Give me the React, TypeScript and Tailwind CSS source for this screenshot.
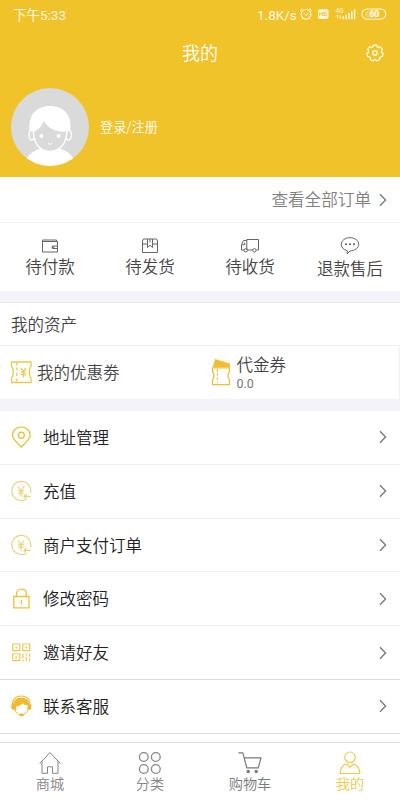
import type { ReactNode } from 'react';

const FONT = "font-['Noto_Sans_CJK_SC_DemiLight','Noto_Sans_CJK_SC_Light','Noto_Sans_CJK_SC',sans-serif] font-light";

function Chevron() {
  return (
    <svg width="8" height="14" viewBox="0 0 8 14" fill="none" stroke="#777" strokeWidth="1.3">
      <path d="M1 1.2 6.6 7 1 12.8" />
    </svg>
  );
}

function StatusBar() {
  return (
    <div className="flex h-7 items-center justify-between px-[13px] font-[Roboto,'Noto_Sans_CJK_SC',sans-serif] font-normal text-white/85">
      <span className="pt-px text-[13.5px] leading-7">下午5:33</span>
      <div className="flex items-center">
        <span className="w-[41px] pt-px text-[13.5px] leading-7">1.8K/s</span>
        <svg width="89" height="14" viewBox="0 0 89 14" fill="none" stroke="currentColor">
          <circle cx="8" cy="7.3" r="4.8" strokeWidth="1.2" />
          <path d="M2 4 4.6 1.5M14 4 11.4 1.5M5.8 6.2 8 8.4 10.300 6.200M4.500 11.500l-1 1.200M11.500 11.500l1 1.200" />
          <rect x="20" y="2.3" width="10.500" height="9.8" rx="2" fill="currentColor" stroke="none" />
          <text x="21" y="9.4" fontSize="6" fontWeight="700" fill="#f1c32a" stroke="none" fontFamily="Roboto">
            HD
          </text>
          <text x="37.500" y="6" fontSize="6.5" fill="currentColor" stroke="none" fontFamily="Roboto">
            4G
          </text>
          <path d="M39.500 8v3.500M38 9.500 39.500 8M42 8v3.500l1.500-1.500" strokeWidth=".8" />
          <path d="M45.400 9.300v3M48.200 7.800v4.500M51 6v6.300M53.800 4.300v8M56.600 2.300v10" strokeWidth="1.5" />
          <rect x="64" y="2" width="23.800" height="10.200" rx="5" strokeWidth="1.1" />
          <rect x="67" y="3.8" width="15" height="6.8" rx="3" fill="currentColor" fillOpacity=".25" stroke="none" />
          <text x="71.400" y="10.100" fontSize="8.500" fontWeight="700" fill="currentColor" stroke="none" fontFamily="Roboto">
            60
          </text>
        </svg>
      </div>
    </div>
  );
}

function GearIcon() {
  return (
    <svg width="18" height="18" viewBox="0 0 18 18" fill="none" stroke="#fffbe8" strokeWidth="1.3" strokeLinejoin="round">
      <path d="M7.3 1.2h3.4l.5 1.7 1.5.7 1.700-.8 2 2.600-1 1.600.2 1.400 1.500 1-.7 3-1.900.4-.9 1.100.1 1.700-2.900 1.300-1.200-1.300H8.400l-1.200 1.300-2.900-1.300.1-1.700-.9-1.100-1.900-.4-.7-3 1.500-1 .2-1.400-1-1.600 2-2.600 1.700.8 1.500-.7z" />
      <circle cx="9" cy="8.900" r="2.100" strokeWidth="1.500" />
    </svg>
  );
}

function Avatar() {
  return (
    <svg width="78" height="78" viewBox="0 0 78 78">
      <clipPath id="avatar-clip">
        <circle cx="39" cy="39" r="39" />
      </clipPath>
      <g clipPath="url(#avatar-clip)">
        <rect width="78" height="78" fill="#dadada" />
        <path d="M14 73C18 66 23 62 29 61h20c6 1 11 5 15 12v8H14z" fill="#fff" />
        <ellipse cx="20.800" cy="47" rx="2.900" ry="5" fill="#dadada" stroke="#fff" strokeWidth="1.400" />
        <ellipse cx="57.500" cy="47" rx="2.900" ry="5" fill="#dadada" stroke="#fff" strokeWidth="1.400" />
        <path
          d="M22.500 30v12C22 54 28 63.500 39 63.500S56 54 55.800 42V30z"
          fill="#dadada"
          stroke="#fff"
          strokeWidth="1.400"
        />
        <path
          d="M18.700 43C16.500 27 25.500 18 39 18s22.500 9 20.300 25L56 43.500C46 44.500 37 41 32.800 32.700 31 38 27 42.500 22.500 43.500z"
          fill="#fff"
        />
        <circle cx="30.400" cy="48" r="2" fill="#fff" />
        <circle cx="47.600" cy="48" r="2" fill="#fff" />
        <path d="M37 55.500q2.300 1.500 4.600 0" fill="none" stroke="#fff" />
      </g>
    </svg>
  );
}

const ORDERS: { label: string; icon: ReactNode; className: string }[] = [
  {
    label: '待付款',
    className: 'mt-[-2px]',
    icon: (
      <>
        <path d="M2.500 5.500V4h14v1.500M2.500 5.500h15v10.500h-15zM17.500 10h-5v2.500h5" />
        <path d="M11.500 11.200h3" />
      </>
    ),
  },
  {
    label: '待发货',
    className: 'mt-[-2px]',
    icon: <path d="M3.500 3h13l1 2v11.500h-15V5zM2.500 8h5M12.500 8h5M7.500 3v8.500l2.500-2.300 2.500 2.300V3M10 3v3.500" />,
  },
  {
    label: '待收货',
    className: 'mt-[-2px]',
    icon: (
      <>
        <path d="M6.800 14V3.500h11.700V14h-2M12.500 14H7.700M4.200 14H1.500V8.500l2.100-4h3.200M2.200 8.700h2.600V6.500" />
        <circle cx="5.800" cy="14.300" r="1.700" />
        <circle cx="14.400" cy="14.300" r="1.700" />
      </>
    ),
  },
  {
    label: '退款售后',
    className: 'mt-0',
    icon: (
      <>
        <path d="M10 1.700c4.900 0 8.700 2.800 8.700 6.600 0 3.600-3.800 6.400-8.700 6.700l-2.800 2.800v-3.200C3.600 13.700 1.300 11.400 1.300 8.300 1.300 4.500 5.100 1.700 10 1.700z" />
        <g fill="#555" stroke="none">
          <circle cx="6" cy="8.300" r="1" />
          <circle cx="10" cy="8.300" r="1" />
          <circle cx="14" cy="8.300" r="1" />
        </g>
      </>
    ),
  },
];

function CouponIcon() {
  return (
    <svg width="22" height="24" viewBox="0 0 22 24" fill="none" stroke="#ecc94b" strokeWidth="1.300">
      <path d="M1.500 1H21v4.500c-2.300 2-2.300 9.300 0 11.500v4.500H1.500V17c2.300-2.200 2.300-9.500 0-11.500z" />
      <path d="M6.800 1.500v3M6.800 6.500v3M6.800 12v3M6.800 17.500v3" />
      <path d="m11 7 2.500 3.500L16 7M13.500 10.500v6M10.800 11.100h5.400M10.800 13.500h5.400" />
    </svg>
  );
}

function VoucherIcon() {
  return (
    <svg width="20" height="28" viewBox="0 0 20 28" fill="none" stroke="#f0bd35" strokeWidth="1.300">
      <path d="M1.800 8.200 4 0l15 4.500v3.700z" fill="#f0bd35" stroke="none" />
      <path d="M1.500 8.800h17v4c-2 1.700-2 6 0 8v4.900h-17v-4.900c2-2 2-6.300 0-8z" />
      <path d="M6.500 10v14" strokeWidth="1.200" strokeDasharray="2.500 1.800" />
    </svg>
  );
}

const rechargeIcon = (
  <g stroke="#ecd277" strokeWidth="1.200">
    <path d="M16 19.200A9.500 9.500 0 1 1 20.600 13" />
    <path d="m7.800 6.500 3.200 4 3.200-4M11 10.500v6M8 10.800h6M8 13.200h5.500M20.800 16.300h-6.500M16.500 14l-2.500 2.300 2.500 2.500" />
  </g>
);

const MENU: { label: string; icon: ReactNode; line: string }[] = [
  {
    label: '地址管理',
    line: 'border-[#f0f0f0]',
    icon: (
      <g stroke="#e8c43e" strokeWidth="1.400">
        <path d="M11.300 21C6.800 16.500 2.500 13 2.500 9.200c0-4.900 3.900-8.100 8.800-8.100s8.800 3.200 8.800 8.100c0 3.800-4.300 7.300-8.800 11.800z" />
        <circle cx="11.300" cy="9.300" r="3" />
      </g>
    ),
  },
  { label: '充值', line: 'border-[#f0f0f0]', icon: rechargeIcon },
  { label: '商户支付订单', line: 'border-[#f0f0f0]', icon: rechargeIcon },
  {
    label: '修改密码',
    line: 'border-[#ebebeb]',
    icon: (
      <path
        d="M3.800 8.500H19v11.300H3.800zM6.500 8.500V6c0-3 2-4.900 4.900-4.900s4.900 1.900 4.900 4.900v2.500M11.400 12v4.500"
        stroke="#f0c136"
        strokeWidth="1.300"
      />
    ),
  },
  {
    label: '邀请好友',
    line: 'border-[#dcdcdc]',
    icon: (
      <g stroke="#edc75a" strokeWidth="1.200">
        <path d="M2.800 2h7v6.700h-7zM12.700 2h7v6.700h-7zM2.800 12h7v6.700h-7zM13 11.500V16M13 17.500v2M16.200 11.500v2M16.200 15v4.500M19.400 11.500V15M19.400 16.500v3" />
        <path d="M5.300 5.400h2M15.200 5.400h2M5.300 15.400h2" strokeWidth="2" />
      </g>
    ),
  },
  {
    label: '联系客服',
    line: 'border-[#dcdcdc]',
    icon: (
      <g>
        <path d="M2.600 11C1.500 4.800 5.800 1 11.300 1S20.800 4.800 19.700 11" stroke="#f0b92f" strokeWidth="1.200" />
        <path
          d="M3.300 9C4 4.600 7 2.700 11.300 2.700s7.300 1.900 8 6.300l2 .7v4.500l-2.500.8-1.500-.5.300-4.500c-2.300.2-3.700-.4-4.800-1.800-1.500 2-4.300 3.200-6.800 3.200l.6 3.300-2.500.3L1.300 13.800V9.700z"
          fill="#f0b92f"
        />
        <path d="M5 15c1.200 3 3.200 4.800 6 4.800 3.500 0 5.700-2 7-5" stroke="#f0b92f" strokeWidth="1" />
        <path d="M9.300 19c1-.8 3.300-.8 4.300 0v2.200h-3.300z" fill="#f0b92f" />
      </g>
    ),
  },
];

const TABS: { label: string; icon: ReactNode; color: string }[] = [
  {
    label: '商城',
    color: 'text-[#858585]',
    icon: <path d="M1.700 13.500 12 2.500l10.300 11M4 11.300v12h5.500v-6.500h5v6.500H20v-12" />,
  },
  {
    label: '分类',
    color: 'text-[#858585]',
    icon: (
      <g strokeWidth="1.300">
        <circle cx="5.800" cy="7" r="4.400" />
        <circle cx="17.800" cy="7" r="4.400" />
        <circle cx="5.800" cy="19" r="4.400" />
        <circle cx="17.800" cy="19" r="4.400" />
      </g>
    ),
  },
  {
    label: '购物车',
    color: 'text-[#7a7a7a]',
    icon: (
      <g strokeWidth="1.200">
        <path d="M.5 2.800h4.300l4 15h11.500L23 7.800H6.200" />
        <circle cx="10.200" cy="21.500" r="1.100" fill="currentColor" />
        <circle cx="18.200" cy="21.500" r="1.100" fill="currentColor" />
      </g>
    ),
  },
  {
    label: '我的',
    color: 'text-[#f0cb45]',
    icon: (
      <g strokeWidth="1.200">
        <circle cx="12" cy="7.300" r="5.300" />
        <path d="M8.500 13.800C4.500 15.300 2.200 18.500 2.200 23.500h19.600c0-5-2.300-8.200-6.300-9.700L12 17.300z" />
      </g>
    ),
  },
];

export default function App() {
  return (
    <div className={`flex h-[800px] w-[400px] flex-col overflow-hidden bg-white ${FONT}`}>
      <header className="h-[177px] shrink-0 bg-[#f1c32a]">
        <StatusBar />
        <div className="grid h-[50px] grid-cols-[1fr_auto_1fr] items-center px-4">
          <h1 className="col-start-2 -mt-0.5 text-[18px] text-white">我的</h1>
          <button type="button" aria-label="设置" className="justify-self-end">
            <GearIcon />
          </button>
        </div>
        <div className="mt-[10px] flex items-center gap-[11px] pl-[11px]">
          <Avatar />
          <span className="text-[13.200px] text-white">登录/注册</span>
        </div>
      </header>

      <div className="flex h-[46px] shrink-0 items-center justify-end gap-2 border-b border-[#f2f2f2] pr-[13px] text-[16.600px] text-[#808080]">
        查看全部订单
        <Chevron />
      </div>
      <div className="grid h-[68px] shrink-0 grid-cols-4 pt-[13px]">
        {ORDERS.map((o) => (
          <div key={o.label} className="flex flex-col items-center text-[#444]">
            <svg width="20" height="20" viewBox="0 0 20 20" fill="none" stroke="#666" strokeWidth="1">
              {o.icon}
            </svg>
            <span className={`text-[16.500px] leading-6 ${o.className}`}>{o.label}</span>
          </div>
        ))}
      </div>

      <div className="h-[11px] shrink-0 bg-[#f3f3f9]" />
      <h2 className="flex h-[43px] shrink-0 items-center border-t border-[#e8e8ea] pl-[11px] text-[16.500px] text-[#444]">
        我的资产
      </h2>
      <div className="grid h-[54px] shrink-0 grid-cols-2 border-t border-r border-[#efeff2] text-[#444]">
        <div className="flex items-center gap-[5px] pl-[10px]">
          <CouponIcon />
          <span className="text-[16.500px]">我的优惠劵</span>
        </div>
        <div className="flex items-center gap-[6px] pl-[11px]">
          <VoucherIcon />
          <div>
            <div className="text-[16.500px] leading-[21px]">代金券</div>
            <div className="font-[Roboto,sans-serif] text-[12.500px] leading-[17px] font-normal text-[#777]">0.0</div>
          </div>
        </div>
      </div>
      <div className="h-3 shrink-0 bg-[#f3f3f9]" />

      <ul className="shrink-0">
        {MENU.map((m) => (
          <li key={m.label} className={`flex h-[53.800px] items-center border-b pr-[13px] pl-[10px] ${m.line}`}>
            <svg width="22" height="22" viewBox="0 0 22 22" fill="none">
              {m.icon}
            </svg>
            <span className="ml-[11px] flex-1 text-[16.500px] text-[#222]">{m.label}</span>
            <Chevron />
          </li>
        ))}
      </ul>

      <nav className="mt-auto grid h-[58px] shrink-0 grid-cols-4 border-t border-[#dedede] pt-[7px]">
        {TABS.map((t) => (
          <a key={t.label} className={`flex flex-col items-center ${t.color}`}>
            <svg width="24" height="25" viewBox="0 0 24 25" fill="none" stroke="currentColor" strokeWidth="1">
              {t.icon}
            </svg>
            <span className="-mt-0.5 text-[14.200px] leading-5">{t.label}</span>
          </a>
        ))}
      </nav>
    </div>
  );
}
